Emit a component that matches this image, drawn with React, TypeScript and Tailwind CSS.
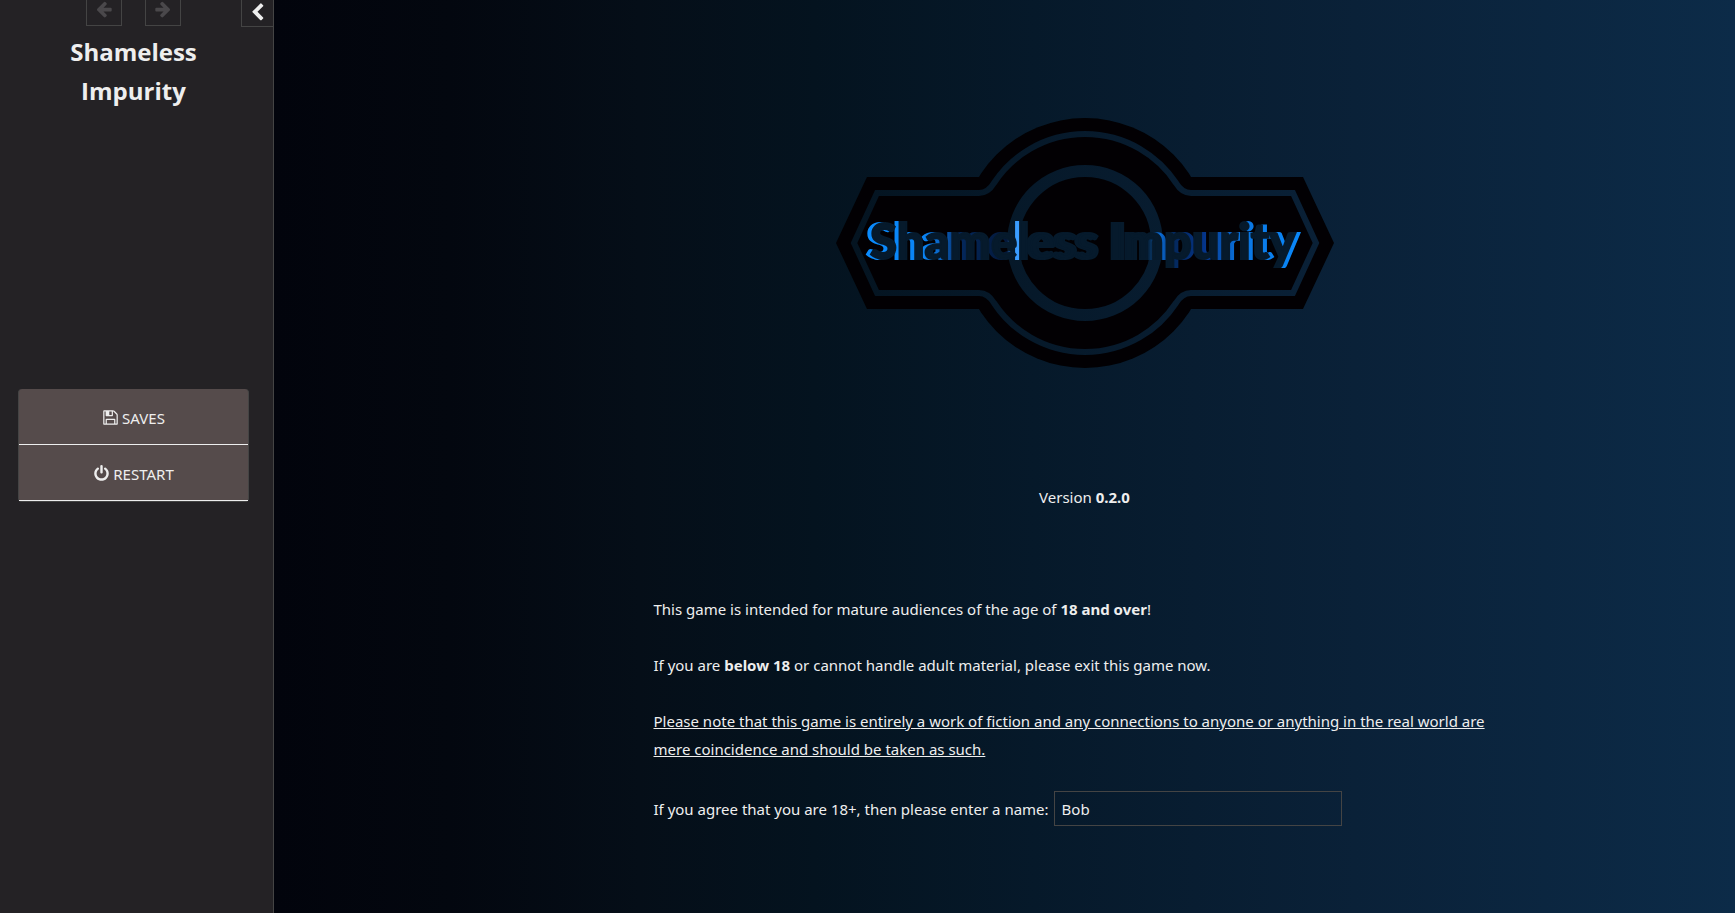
import { useState } from 'react';

const ICONS = {
  arrow:
    'M1664 896v128q0 53-32.5 90.5t-84.5 37.5h-704l293 294q38 36 38 90t-38 90l-75 76q-37 37-90 37-52 0-91-37l-651-652q-37-37-37-90 0-52 37-91l651-650q38-38 91-38 52 0 90 38l75 74q38 38 38 91t-38 91l-293 293h704q52 0 84.5 37.5t32.5 90.5z',
  chevron:
    'M1427 301l-531 531 531 531q19 19 19 45t-19 45l-166 166q-19 19-45 19t-45-19l-742-742q-19-19-19-45t19-45l742-742q19-19 45-19t45 19l166 166q19 19 19 45t-19 45z',
  save: 'M512 1536h768v-384h-768v384zm896 0h128v-896q0-14-10-38.5t-20-34.5l-281-281q-10-10-34-20t-39-10v416q0 40-28 68t-68 28h-576q-40 0-68-28t-28-68v-416h-128v1280h128v-416q0-40 28-68t68-28h832q40 0 68 28t28 68v416zm-384-928v-320q0-13-9.5-22.5t-22.5-9.5h-192q-13 0-22.5 9.5t-9.5 22.5v320q0 13 9.5 22.5t22.5 9.5h192q13 0 22.5-9.5t9.5-22.5zm640 32v928q0 40-28 68t-68 28h-1344q-40 0-68-28t-28-68v-1344q0-40 28-68t68-28h928q40 0 88 20t76 48l280 280q28 28 48 76t20 88z',
  power:
    'M1664 896q0 156-61 298t-164 245-245 164-298 61-298-61-245-164-164-245-61-298q0-182 80.5-343t226.5-270q43-32 95.5-25t83.5 50q32 42 24.5 94.5t-49.5 84.5q-98 74-151.5 181t-53.5 228q0 104 40.5 198.5t109.5 163.5 163.5 109.5 198.5 40.5 198.5-40.5 163.5-109.5 109.5-163.5 40.5-198.5q0-121-53.5-228t-151.5-181q-42-32-49.5-84.5t24.5-94.5q31-43 84-50t95 25q146 109 226.5 270t80.5 343zm-640-768v640q0 52-38 90t-90 38-90-38-38-90v-640q0-52 38-90t90-38 90 38 38 90z',
};

function Icon({ name, className }: { name: keyof typeof ICONS; className: string }) {
  return (
    <svg viewBox="0 0 1792 1792" fill="currentColor" aria-hidden="true" className={className}>
      <path d={ICONS[name]} />
    </svg>
  );
}

function Logo() {
  return (
    <svg
      viewBox="0 0 498 250"
      role="img"
      aria-label="Shameless Impurity"
      className="w-full max-w-[498px] font-['Lato','Open_Sans',sans-serif] text-[49px] font-black"
    >
      <defs>
        <linearGradient id="glow" gradientUnits="userSpaceOnUse" x1="30" y1="0" x2="470" y2="0">
          <stop offset="0" stopColor="#0a8cff" />
          <stop offset="0.14" stopColor="#0a84f5" />
          <stop offset="0.19" stopColor="#0a5cb8" />
          <stop offset="0.22" stopColor="#04285c" />
          <stop offset="0.33" stopColor="#04183a" />
          <stop offset="0.34" stopColor="#3a9cff" />
          <stop offset="0.36" stopColor="#3a9cff" />
          <stop offset="0.37" stopColor="#061a2c" />
          <stop offset="0.63" stopColor="#061a2c" />
          <stop offset="0.66" stopColor="#0a6cd8" />
          <stop offset="0.69" stopColor="#04285c" />
          <stop offset="0.76" stopColor="#04348a" />
          <stop offset="0.84" stopColor="#0a74e0" />
          <stop offset="1" stopColor="#0a8cff" />
        </linearGradient>
        <mask id="cut">
          <rect width="498" height="250" fill="#fff" />
          <path
            d="M18 125L41 75H143Q152 75 158 65A109 109 0 0 1 340 65Q346 75 355 75H457L480 125L457 175H355Q346 175 340 185A109 109 0 0 1 158 185Q152 175 143 175H41Z"
            fill="none"
            stroke="#000"
            strokeWidth="6"
          />
          <circle cx="249" cy="125" r="72" fill="none" stroke="#000" strokeWidth="12" />
        </mask>
      </defs>
      <g mask="url(#cut)" fill="#020003">
        <circle cx="249" cy="125" r="125" />
        <path d="M0 125L31 59H467L498 125L467 191H31Z" />
      </g>
      {/* lit edges that stick out from behind the words */}
      <g fill="url(#glow)" stroke="url(#glow)" strokeWidth="2">
        <use href="#word-first" x="-4" />
        <use href="#word-last" x="4" />
      </g>
      <g fill="#061a2c" stroke="#061a2c" strokeWidth="2">
        <text id="word-first" x="34" y="141">
          Shameless
        </text>
        <text id="word-last" x="272" y="141">
          Impurity
        </text>
      </g>
    </svg>
  );
}

function Sidebar({ onToggle }: { onToggle: () => void }) {
  return (
    <aside className="w-[274px] shrink-0 border-r border-[#444] bg-[#242225]">
      <div className="flex h-8 items-start pl-[86px]">
        <div className="flex gap-[23px] text-[#4a484b]">
          <button aria-label="Back" className="flex h-[26px] w-9 items-start justify-center border border-t-0 border-[#444]">
            <Icon name="arrow" className="size-[18px]" />
          </button>
          <button aria-label="Forward" className="flex h-[26px] w-9 items-start justify-center border border-t-0 border-[#444]">
            <Icon name="arrow" className="size-[18px] -scale-x-100" />
          </button>
        </div>
        <button
          aria-label="Toggle the sidebar"
          onClick={onToggle}
          className="ml-auto flex h-[27px] w-8 items-start justify-center border-b border-l border-[#444] pt-[3px]"
        >
          <Icon name="chevron" className="size-[19px]" />
        </button>
      </div>

      <div className="pr-6 pl-[18px]">
        <h1 className="mx-auto w-40 text-center font-['Open_Sans',sans-serif] text-2xl leading-[39px] font-bold">
          Shameless Impurity
        </h1>
        <ul className="mt-[279px] rounded-sm border border-t-0 border-[#444] bg-[#554b4b]">
          <li>
            <button className="flex h-14 w-full items-center justify-center gap-[3px] border-b border-[#eee] pt-[2px]">
              <Icon name="save" className="size-[17px]" />
              SAVES
            </button>
          </li>
          <li>
            <button className="flex h-14 w-full items-center justify-center gap-[3px] border-b border-[#eee] pt-[2px]">
              <Icon name="power" className="size-[17px]" />
              RESTART
            </button>
          </li>
        </ul>
      </div>
    </aside>
  );
}

export default function App() {
  const [name, setName] = useState('Bob');
  const [open, setOpen] = useState(true);

  return (
    <div className="flex min-h-screen bg-black font-['Noto_Sans','Open_Sans',sans-serif] text-[15px] leading-7 text-[#eee]">
      {open && <Sidebar onToggle={() => setOpen(false)} />}
      <main className="min-w-0 flex-1 bg-[linear-gradient(to_right,#02040c_0%,#03070f_12%,#050e18_25%,#04131f_37%,#06192a_52%,#0a2138_74%,#0c2b48_100%)] pt-[118px] pl-40">
        <div className="mx-auto max-w-[862px]">
          <div className="flex justify-center">
            <Logo />
          </div>
          <p className="mt-[115px] text-center">
            Version <b>0.2.0</b>
          </p>
          <div className="mt-21 space-y-7">
            <p>
              This game is intended for mature audiences of the age of <b>18 and over</b>!
            </p>
            <p>
              If you are <b>below 18</b> or cannot handle adult material, please exit this game now.
            </p>
            <p className="underline">
              Please note that this game is entirely a work of fiction and any connections to anyone or anything in the
              real world are mere coincidence and should be taken as such.
            </p>
            <div className="flex items-center gap-[5px]">
              <label htmlFor="player-name">If you agree that you are 18+, then please enter a name:</label>
              <input
                id="player-name"
                type="text"
                value={name}
                onChange={(e) => setName(e.target.value)}
                className="h-[35px] w-72 border border-[#444] bg-transparent px-[7px] outline-none"
              />
            </div>
          </div>
        </div>
      </main>
    </div>
  );
}
